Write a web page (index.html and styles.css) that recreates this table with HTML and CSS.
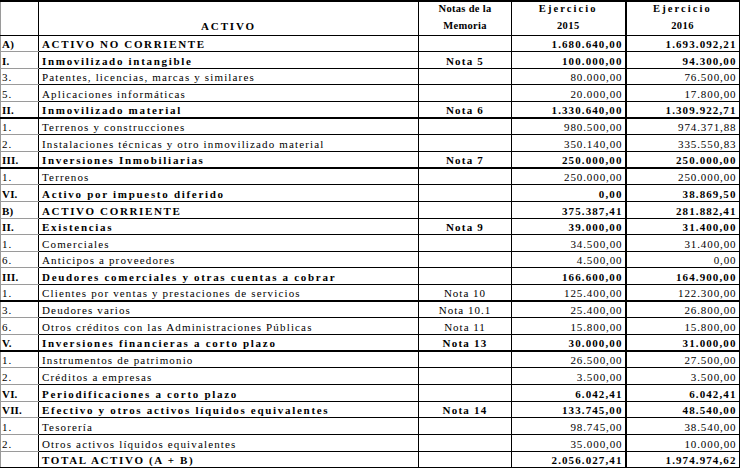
FILE: index.html
```html
<!DOCTYPE html>
<html lang="es">
<head>
<meta charset="utf-8">
<title>Activo</title>
<link rel="stylesheet" href="styles.css">
</head>
<body>
<table class="bal">
  <colgroup>
    <col class="c1"><col class="c2"><col class="c3"><col class="c4"><col class="c5">
  </colgroup>
  <thead>
    <tr class="h1">
      <th class="k hk1"></th>
      <th class="d"></th>
      <th class="n">Notas de la</th>
      <th class="v">Ejercicio</th>
      <th class="v last">Ejercicio</th>
    </tr>
    <tr class="h2">
      <th class="k"></th>
      <th class="d">ACTIVO</th>
      <th class="n">Memoria</th>
      <th class="v yr">2015</th>
      <th class="v yr last">2016</th>
    </tr>
  </thead>
  <tbody>
    <tr class="b"><td class="k">A)</td><td class="d caps">ACTIVO NO CORRIENTE</td><td class="n"></td><td class="v">1.680.640,00</td><td class="v last">1.693.092,21</td></tr>
    <tr class="b"><td class="k">I.</td><td class="d">Inmovilizado intangible</td><td class="n">Nota 5</td><td class="v">100.000,00</td><td class="v last">94.300,00</td></tr>
    <tr><td class="k">3.</td><td class="d">Patentes, licencias, marcas y similares</td><td class="n"></td><td class="v">80.000,00</td><td class="v last">76.500,00</td></tr>
    <tr><td class="k">5.</td><td class="d">Aplicaciones informáticas</td><td class="n"></td><td class="v">20.000,00</td><td class="v last">17.800,00</td></tr>
    <tr class="b thick"><td class="k">II.</td><td class="d">Inmovilizado material</td><td class="n">Nota 6</td><td class="v">1.330.640,00</td><td class="v last">1.309.922,71</td></tr>
    <tr><td class="k">1.</td><td class="d">Terrenos y construcciones</td><td class="n"></td><td class="v">980.500,00</td><td class="v last">974.371,88</td></tr>
    <tr><td class="k">2.</td><td class="d">Instalaciones técnicas y otro inmovilizado material</td><td class="n"></td><td class="v">350.140,00</td><td class="v last">335.550,83</td></tr>
    <tr class="b thick"><td class="k">III.</td><td class="d">Inversiones Inmobiliarias</td><td class="n">Nota 7</td><td class="v">250.000,00</td><td class="v last">250.000,00</td></tr>
    <tr><td class="k">1.</td><td class="d">Terrenos</td><td class="n"></td><td class="v">250.000,00</td><td class="v last">250.000,00</td></tr>
    <tr class="b"><td class="k">VI.</td><td class="d">Activo por impuesto diferido</td><td class="n"></td><td class="v">0,00</td><td class="v last">38.869,50</td></tr>
    <tr class="b"><td class="k">B)</td><td class="d caps">ACTIVO CORRIENTE</td><td class="n"></td><td class="v">375.387,41</td><td class="v last">281.882,41</td></tr>
    <tr class="b"><td class="k">II.</td><td class="d">Existencias</td><td class="n">Nota 9</td><td class="v">39.000,00</td><td class="v last">31.400,00</td></tr>
    <tr><td class="k">1.</td><td class="d">Comerciales</td><td class="n"></td><td class="v">34.500,00</td><td class="v last">31.400,00</td></tr>
    <tr><td class="k">6.</td><td class="d">Anticipos a proveedores</td><td class="n"></td><td class="v">4.500,00</td><td class="v last">0,00</td></tr>
    <tr class="b"><td class="k">III.</td><td class="d">Deudores comerciales y otras cuentas a cobrar</td><td class="n"></td><td class="v">166.600,00</td><td class="v last">164.900,00</td></tr>
    <tr class="thick"><td class="k">1.</td><td class="d">Clientes por ventas y prestaciones de servicios</td><td class="n">Nota 10</td><td class="v">125.400,00</td><td class="v last">122.300,00</td></tr>
    <tr><td class="k">3.</td><td class="d">Deudores varios</td><td class="n">Nota 10.1</td><td class="v">25.400,00</td><td class="v last">26.800,00</td></tr>
    <tr><td class="k">6.</td><td class="d">Otros créditos con las Administraciones Públicas</td><td class="n">Nota 11</td><td class="v">15.800,00</td><td class="v last">15.800,00</td></tr>
    <tr class="b thick"><td class="k">V.</td><td class="d">Inversiones financieras a corto plazo</td><td class="n">Nota 13</td><td class="v">30.000,00</td><td class="v last">31.000,00</td></tr>
    <tr><td class="k">1.</td><td class="d">Instrumentos de patrimonio</td><td class="n"></td><td class="v">26.500,00</td><td class="v last">27.500,00</td></tr>
    <tr><td class="k">2.</td><td class="d">Créditos a empresas</td><td class="n"></td><td class="v">3.500,00</td><td class="v last">3.500,00</td></tr>
    <tr class="b"><td class="k">VI.</td><td class="d">Periodificaciones a corto plazo</td><td class="n"></td><td class="v">6.042,41</td><td class="v last">6.042,41</td></tr>
    <tr class="b"><td class="k">VII.</td><td class="d">Efectivo y otros activos líquidos equivalentes</td><td class="n">Nota 14</td><td class="v">133.745,00</td><td class="v last">48.540,00</td></tr>
    <tr><td class="k">1.</td><td class="d">Tesorería</td><td class="n"></td><td class="v">98.745,00</td><td class="v last">38.540,00</td></tr>
    <tr><td class="k">2.</td><td class="d">Otros activos líquidos equivalentes</td><td class="n"></td><td class="v">35.000,00</td><td class="v last">10.000,00</td></tr>
    <tr class="b total"><td class="k"></td><td class="d caps">TOTAL ACTIVO (A + B)</td><td class="n"></td><td class="v">2.056.027,41</td><td class="v last">1.974.974,62</td></tr>
  </tbody>
</table>
</body>
</html>
```
FILE: styles.css
```css
html, body {
  margin: 0;
  padding: 0;
  background: #ffffff;
}
.bal {
  border-collapse: collapse;
  table-layout: fixed;
  width: 739px;
  font-family: "Liberation Serif", "Times New Roman", serif;
  font-size: 11px;
  color: #000;
}
.c1 { width: 38px; }
.c2 { width: 380px; }
.c3 { width: 93px; }
.c4 { width: 114px; }
.c5 { width: 114px; }

.bal tbody tr { height: 16.65px; }
.bal th, .bal td {
  padding: 0 2px 1px 2px;
  line-height: 12px;
  vertical-align: bottom;
  white-space: nowrap;
  overflow: hidden;
  border-left: 1px solid #000;
  border-bottom: 1px solid #000;
}

/* header */
.bal thead tr.h1 { height: 16px; }
.bal thead tr.h2 { height: 18px; }
.bal thead tr.h1 th {
  border-top: 2px solid #000;
  border-bottom: none;
  padding-bottom: 2px;
}
.bal thead tr.h2 th { padding-bottom: 3px; }
.bal thead th {
  font-weight: bold;
  text-align: center;
  font-size: 10.5px;
  letter-spacing: 2.1px;
}
.bal thead th.d { font-size: 11px; letter-spacing: 1.85px; }
.bal thead th.n { letter-spacing: 0.3px; }
.bal thead th.yr { letter-spacing: 0.4px; }
.bal th.hk1 { border-bottom: 1px solid #c8c8c8; }

/* key column */
.bal .k {
  border-left: 1px solid #9a9a9a;
  padding-left: 1px;
  text-align: left;
  letter-spacing: 1px;
}
.bal tbody .k { border-bottom-color: #9a9a9a; }
.bal tbody tr.b td.k { font-weight: bold; letter-spacing: 0.2px; }

/* description */
.bal td.d {
  text-align: left;
  padding-left: 3px;
  letter-spacing: 1.15px;
}
.bal tr.b td.d { font-weight: bold; letter-spacing: 1.7px; }
.bal tr.b td.d.caps { letter-spacing: 1.65px; }

/* notes */
.bal td.n {
  text-align: center;
  letter-spacing: 1px;
}
.bal tr.b td.n { font-weight: bold; letter-spacing: 1.2px; }

/* values */
.bal td.v {
  text-align: right;
  padding-right: 2px;
  letter-spacing: 0.9px;
}
.bal tr.b td.v { font-weight: bold; letter-spacing: 1.1px; }

.bal .last {
  border-right: 2px solid #000;
  border-left: 2px solid #000;
}
.bal tr.thick td { border-bottom: 2px solid #000; }
.bal tr.total td { border-bottom: 2px solid #000; }
```
